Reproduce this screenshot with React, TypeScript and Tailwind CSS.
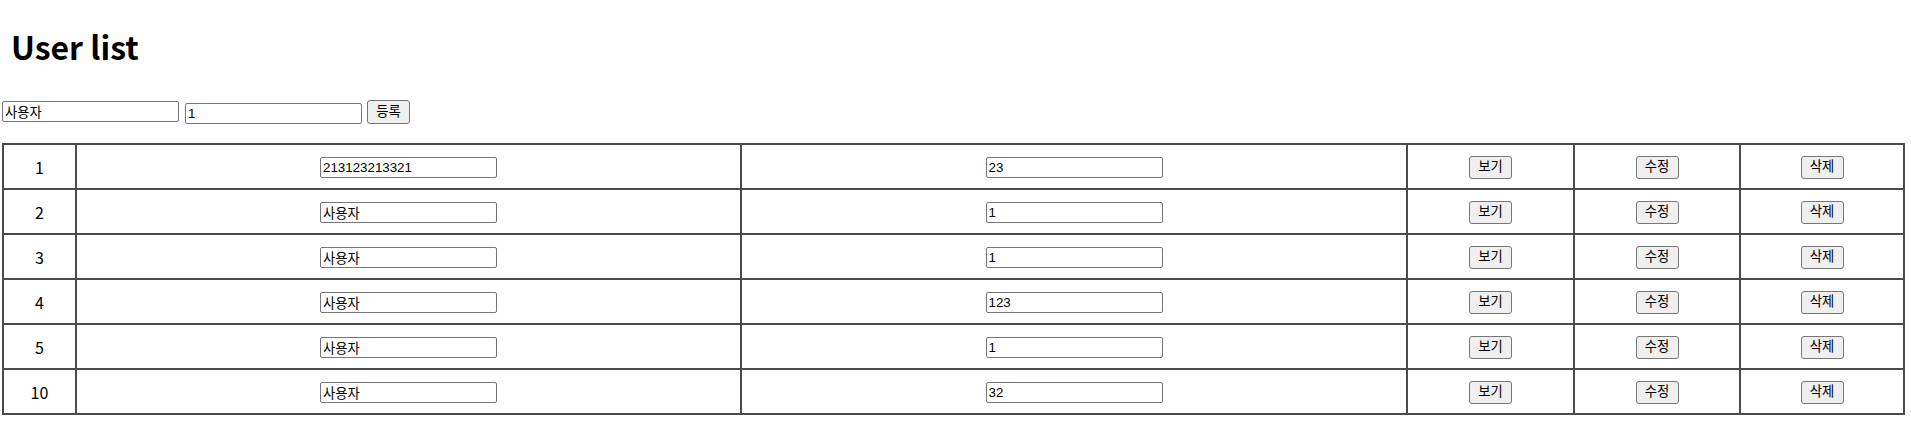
const users = [
  { id: 1, name: "213123213321", age: "23" },
  { id: 2, name: "사용자", age: "1" },
  { id: 3, name: "사용자", age: "1" },
  { id: 4, name: "사용자", age: "123" },
  { id: 5, name: "사용자", age: "1" },
  { id: 10, name: "사용자", age: "32" },
];

const inputCls =
  "h-[21px] w-[177px] border border-[#767676] rounded-[2px] bg-white px-[2px] text-[13.33px] text-black outline-none";
const btnCls =
  "px-[6px] border border-[#767676] rounded-[3px] bg-[#efefef] text-[13.33px] text-black leading-none";
const cellCls = "border border-[#4a4a4a] h-[45px] p-0 text-center align-middle";

function App() {
  return (
    <div
      className="min-h-screen bg-white text-black pt-[26px]"
      style={{ fontFamily: '"Liberation Sans", "Noto Sans CJK KR", sans-serif' }}
    >
      <h1
        className="pl-[11px] text-[32px] font-bold leading-[40px]"
        style={{ fontFamily: '"Noto Sans CJK KR", "Noto Sans", sans-serif' }}
      >
        User list
      </h1>

      <div className="mt-[34px] flex items-start pl-[2px]">
        <input className={inputCls + " mt-[1px]"} defaultValue="사용자" />
        <input className={inputCls + " ml-[6px] mt-[3px]"} defaultValue="1" />
        <button className={btnCls + " ml-[5px] h-[24px] w-[43px]"}>등록</button>
      </div>

      <table className="mt-[19px] ml-[2px] w-[1903px] table-fixed border-separate border-spacing-0 border border-[#4a4a4a]">
        <colgroup>
          <col className="w-[73px]" />
          <col className="w-[665px]" />
          <col className="w-[666px]" />
          <col className="w-[167px]" />
          <col className="w-[166px]" />
          <col className="w-[164px]" />
        </colgroup>
        <tbody>
          {users.map((u) => (
            <tr key={u.id}>
              <td
                className={cellCls + " text-[16px]"}
                style={{ fontFamily: '"Noto Sans CJK KR", sans-serif' }}
              >
                {u.id}
              </td>
              <td className={cellCls}>
                <input className={inputCls + " align-middle"} defaultValue={u.name} />
              </td>
              <td className={cellCls}>
                <input className={inputCls + " align-middle"} defaultValue={u.age} />
              </td>
              <td className={cellCls}>
                <button className={btnCls + " h-[23px] w-[43px] align-middle"}>보기</button>
              </td>
              <td className={cellCls}>
                <button className={btnCls + " h-[23px] w-[43px] align-middle"}>수정</button>
              </td>
              <td className={cellCls}>
                <button className={btnCls + " h-[23px] w-[43px] align-middle"}>삭제</button>
              </td>
            </tr>
          ))}
        </tbody>
      </table>
    </div>
  );
}

export default App;
